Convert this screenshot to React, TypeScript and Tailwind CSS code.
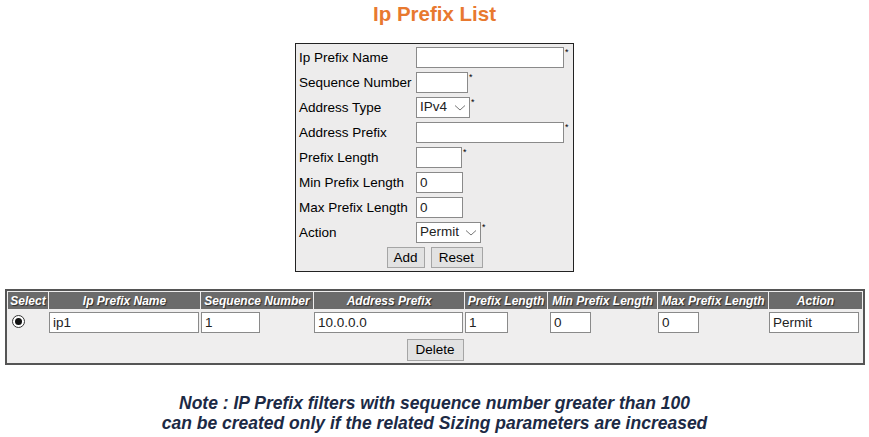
import React from "react";

const font = { fontFamily: '"Liberation Sans", Arial, sans-serif' };

function Chevron() {
  return (
    <svg width="12" height="8" viewBox="0 0 12 8" className="ml-auto mr-[3px]">
      <path d="M1 1.5 L6 6 L11 1.5" fill="none" stroke="#777" strokeWidth="1" />
    </svg>
  );
}

function TextBox({ w, value = "" }: { w: string; value?: string }) {
  return (
    <div
      className={`${w} h-[21px] border border-[#8a8a8a] bg-white pl-[3px] text-[13.5px] leading-[19px] text-[#222]`}
    >
      {value}
    </div>
  );
}

function Star() {
  return <span className="ml-[1px] self-start pt-[3px] text-[9px] leading-none">*</span>;
}

export default function App() {
  const rows: { label: string; field: React.ReactNode; star?: boolean }[] = [
    { label: "Ip Prefix Name", field: <TextBox w="w-[148px]" />, star: true },
    { label: "Sequence Number", field: <TextBox w="w-[52px]" />, star: true },
    {
      label: "Address Type",
      field: (
        <div className="flex h-[21px] w-[54px] items-center border border-[#8a8a8a] bg-white pl-[3px] text-[13.5px] text-[#222]">
          IPv4
          <Chevron />
        </div>
      ),
      star: true,
    },
    { label: "Address Prefix", field: <TextBox w="w-[148px]" />, star: true },
    { label: "Prefix Length", field: <TextBox w="w-[46px]" />, star: true },
    { label: "Min Prefix Length", field: <TextBox w="w-[47px]" value="0" /> },
    { label: "Max Prefix Length", field: <TextBox w="w-[47px]" value="0" /> },
    {
      label: "Action",
      field: (
        <div className="flex h-[21px] w-[65px] items-center border border-[#8a8a8a] bg-white pl-[3px] text-[13.5px] text-[#222]">
          Permit
          <Chevron />
        </div>
      ),
      star: true,
    },
  ];

  const headers = [
    { t: "Select", w: "w-[40px]" },
    { t: "Ip Prefix Name", w: "w-[151px]" },
    { t: "Sequence Number", w: "w-[112px]" },
    { t: "Address Prefix", w: "w-[150px]" },
    { t: "Prefix Length", w: "w-[82px]" },
    { t: "Min Prefix Length", w: "w-[109px]" },
    { t: "Max Prefix Length", w: "w-[110px]" },
    { t: "Action", w: "w-[93px]" },
  ];

  return (
    <div className="min-h-screen bg-white text-black" style={font}>
      {/* Title */}
      <h1 className="h-[43px] pt-[2px] text-center text-[20.5px] font-bold leading-[24px] text-[#e8792f]">
        Ip Prefix List
      </h1>

      {/* Add form */}
      <div className="mx-auto w-[279px] border border-[#222] bg-[#edecec] px-[3px] pt-[1px]">
        {rows.map((r) => (
          <div key={r.label} className="flex h-[25px] items-center">
            <div className="w-[117px] text-[13.5px] leading-none">{r.label}</div>
            {r.field}
            {r.star && <Star />}
          </div>
        ))}
        <div className="flex h-[26px] items-center justify-center gap-[6px] pb-[1px]">
          <button className="h-[21px] w-[38px] border border-[#a5a5a5] bg-[#e2e2e2] text-[13.5px] leading-none">
            Add
          </button>
          <button className="h-[21px] w-[52px] border border-[#a5a5a5] bg-[#e2e2e2] text-[13.5px] leading-none">
            Reset
          </button>
        </div>
      </div>

      {/* List table */}
      <div className="ml-[5px] mt-[17px] w-[860px] border-2 border-[#555] bg-[#efeeee]">
        <table className="table-fixed border-separate border-spacing-[1px]">
          <thead>
            <tr>
              {headers.map((h) => (
                <th
                  key={h.t}
                  className={`${h.w} h-[17px] bg-[#6b6b6b] p-0 text-center text-[12px] font-bold italic leading-none text-white [text-shadow:1px_1px_1px_#2a2a2a]`}
                >
                  {h.t}
                </th>
              ))}
            </tr>
          </thead>
          <tbody>
            <tr className="align-top">
              <td className="h-[26px] p-0 pt-[5px]">
                <span className="ml-[4px] flex h-[13px] w-[13px] items-center justify-center rounded-full border border-[#333] bg-white">
                  <span className="h-[7px] w-[7px] rounded-full bg-[#111]" />
                </span>
              </td>
              <td className="p-0 pt-[2px]">
                <TextBox w="w-[150px]" value="ip1" />
              </td>
              <td className="p-0 pt-[2px]">
                <TextBox w="w-[59px]" value="1" />
              </td>
              <td className="p-0 pt-[2px]">
                <TextBox w="w-[149px]" value="10.0.0.0" />
              </td>
              <td className="p-0 pt-[2px]">
                <TextBox w="w-[43px]" value="1" />
              </td>
              <td className="p-0 pl-[2px] pt-[2px]">
                <TextBox w="w-[41px]" value="0" />
              </td>
              <td className="p-0 pt-[2px]">
                <TextBox w="w-[41px]" value="0" />
              </td>
              <td className="p-0 pt-[2px]">
                <TextBox w="w-[90px]" value="Permit" />
              </td>
            </tr>
            <tr>
              <td colSpan={8} className="h-[25px] p-0 text-center align-top">
                <button className="h-[22px] w-[57px] border border-[#a5a5a5] bg-[#e2e2e2] text-[13.5px] leading-none">
                  Delete
                </button>
              </td>
            </tr>
          </tbody>
        </table>
      </div>

      {/* Note */}
      <div className="mt-[28px] text-center text-[17.5px] font-bold italic leading-[20px] text-[#1c2a45]">
        <p>Note : IP Prefix filters with sequence number greater than 100</p>
        <p>can be created only if the related Sizing parameters are increased</p>
      </div>
    </div>
  );
}
